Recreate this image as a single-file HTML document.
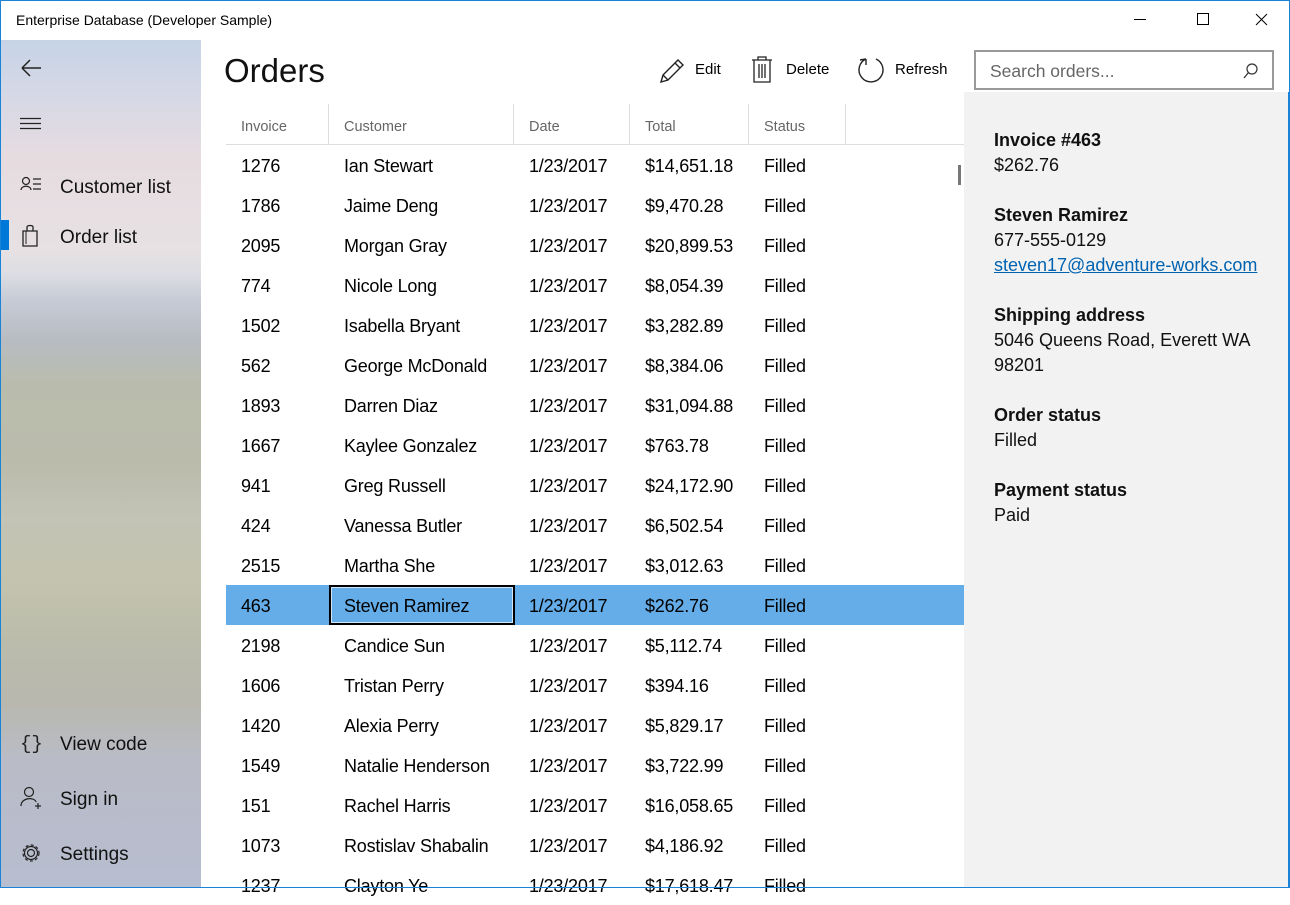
<!DOCTYPE html>
<html><head><meta charset="utf-8">
<style>
*{margin:0;padding:0;box-sizing:border-box}
body{width:1290px;height:888px;overflow:hidden;background:#fff;font-family:"Liberation Sans",sans-serif;color:#000;position:relative}
.frame{position:absolute;left:0;top:0;width:1290px;height:888px;border:1px solid #1883d7;pointer-events:none;z-index:10}
.title{position:absolute;left:16px;top:12px;font-size:14px;color:#000}
.side{position:absolute;left:1px;top:40px;width:200px;height:847px;background:linear-gradient(180deg,#c7d3e7 0px,#d4d8e6 50px,#e6dce0 120px,#e7e1e3 210px,#dcdde3 235px,#c6cbd6 260px,#b8bcc2 300px,#b9bcac 345px,#bbbbac 420px,#c3c3b6 480px,#c3c3ae 540px,#bbbcab 600px,#b8b8ae 660px,#b9bcc6 720px,#b8bdd0 847px)}
.nav{position:absolute;left:60px;font-size:19px;color:#111}
.ico{position:absolute}
.hdr{position:absolute;top:119px;font-size:14.5px;color:#666}
.vline{position:absolute;top:104px;width:1px;height:41px;background:#ddd}
.row{position:absolute;left:226px;width:738px;height:40px;font-size:18px;letter-spacing:-0.2px}
.row span{position:absolute;top:11px}
.c1{left:15px}.c2{left:118px}.c3{left:303px}.c4{left:419px}.c5{left:538px}
.sel{background:#65ade8}
.pane{position:absolute;left:964px;top:92px;width:324px;height:795px;background:#f2f2f2;overflow:hidden}
.pane b{font-weight:bold;display:block}
.pane div{position:absolute;left:30px;font-size:18px;line-height:25px;color:#111}
</style></head><body>
<div class="frame"></div>
<div class="title">Enterprise Database (Developer Sample)</div>
<svg class="ico" style="left:1134px;top:12px" width="140" height="16"><line x1="0" y1="7.5" x2="12" y2="7.5" stroke="#000"/><rect x="63.5" y="1.5" width="11" height="11" fill="none" stroke="#000"/><path d="M122 2 L133 13 M133 2 L122 13" stroke="#000"/></svg>

<div class="side"></div>
<svg class="ico" style="left:20px;top:58px" width="24" height="20"><path d="M2 10 H21 M2 10 L10 2 M2 10 L10 18" stroke="#222" stroke-width="1.5" fill="none"/></svg>
<svg class="ico" style="left:20px;top:116px" width="22" height="14"><path d="M0 2.5H21M0 7.5H21M0 12.5H21" stroke="#222" stroke-width="1.2"/></svg>
<svg class="ico" style="left:20px;top:176px" width="24" height="18"><circle cx="6" cy="5" r="3.5" fill="none" stroke="#222" stroke-width="1.2"/><path d="M1 14 C1 9 11 9 11 14" fill="none" stroke="#222" stroke-width="1.2"/><path d="M13 3H21M13 8H21M13 13H21" stroke="#222" stroke-width="1.2"/></svg>
<div class="nav" style="top:177px">Customer list</div>
<div style="position:absolute;left:1px;top:220px;width:8px;height:30px;background:#0078d7"></div>
<svg class="ico" style="left:21px;top:224px" width="20" height="24"><path d="M2 7H16V22H2Z M6 7V3C6 1 12 1 12 3V7" fill="none" stroke="#222" stroke-width="1.3"/><path d="M5 7V20" stroke="#222" stroke-width="1"/></svg>
<div class="nav" style="top:227px">Order list</div>
<svg class="ico" style="left:20px;top:732px" width="24" height="22"><text x="0" y="17" font-family="Liberation Mono" font-size="19" fill="#222">{}</text></svg>
<div class="nav" style="top:734px">View code</div>
<svg class="ico" style="left:20px;top:786px" width="24" height="24"><circle cx="9" cy="6" r="4.5" fill="none" stroke="#222" stroke-width="1.2"/><path d="M1 20 C1 11 15 11 16 16" fill="none" stroke="#222" stroke-width="1.2"/><path d="M18 17V23M15 20H21" stroke="#222" stroke-width="1.2"/></svg>
<div class="nav" style="top:789px">Sign in</div>
<svg class="ico" style="left:20px;top:842px" width="22" height="22"><circle cx="11" cy="11" r="3.5" fill="none" stroke="#222" stroke-width="1.2"/><circle cx="11" cy="11" r="8" fill="none" stroke="#222" stroke-width="1.2" stroke-dasharray="3 2.3"/><circle cx="11" cy="11" r="6.5" fill="none" stroke="#222" stroke-width="1.2"/></svg>
<div class="nav" style="top:844px">Settings</div>

<div style="position:absolute;left:224px;top:52px;font-size:33px;color:#111">Orders</div>
<svg class="ico" style="left:658px;top:57px" width="28" height="28"><path d="M3 25 L5 18 L20 3 L25 8 L10 23 Z M5 18 L10 23 M17 6 L22 11" fill="none" stroke="#222" stroke-width="1.4"/></svg>
<div style="position:absolute;left:695px;top:61px;font-size:15px">Edit</div>
<svg class="ico" style="left:750px;top:56px" width="26" height="28"><path d="M2 4H22 M8 4V1H16V4 M4 4V26H20V4 M9 8V22 M12 8V22 M15 8V22" fill="none" stroke="#222" stroke-width="1.3"/></svg>
<div style="position:absolute;left:786px;top:61px;font-size:15px">Delete</div>
<svg class="ico" style="left:857px;top:55px" width="30" height="30"><path d="M9 4 A12 12 0 1 0 19 4 M9 4 L9 10 M9 4 L3 5" fill="none" stroke="#222" stroke-width="1.4"/></svg>
<div style="position:absolute;left:895px;top:61px;font-size:15px">Refresh</div>
<div style="position:absolute;left:974px;top:50px;width:300px;height:40px;border:2px solid #999;background:#fff"><span style="position:absolute;left:14px;top:9px;font-size:17.5px;color:#666">Search orders...</span>
<svg style="position:absolute;right:12px;top:10px" width="18" height="18"><circle cx="10" cy="7" r="5" fill="none" stroke="#333" stroke-width="1.2"/><path d="M6.5 10.5 L2 16" stroke="#333" stroke-width="1.3"/></svg></div>

<div class="hdr" style="left:241px">Invoice</div>
<div class="hdr" style="left:344px">Customer</div>
<div class="hdr" style="left:529px">Date</div>
<div class="hdr" style="left:645px">Total</div>
<div class="hdr" style="left:764px">Status</div>
<div class="vline" style="left:328px"></div><div class="vline" style="left:513px"></div><div class="vline" style="left:629px"></div><div class="vline" style="left:748px"></div><div class="vline" style="left:845px"></div>
<div style="position:absolute;left:226px;top:144px;width:738px;height:1px;background:#ddd"></div>
<div style="position:absolute;left:958px;top:165px;width:3px;height:20px;background:#777"></div>

<div class="row" style="top:145px"><span class="c1">1276</span><span class="c2">Ian Stewart</span><span class="c3">1/23/2017</span><span class="c4">$14,651.18</span><span class="c5">Filled</span></div>
<div class="row" style="top:185px"><span class="c1">1786</span><span class="c2">Jaime Deng</span><span class="c3">1/23/2017</span><span class="c4">$9,470.28</span><span class="c5">Filled</span></div>
<div class="row" style="top:225px"><span class="c1">2095</span><span class="c2">Morgan Gray</span><span class="c3">1/23/2017</span><span class="c4">$20,899.53</span><span class="c5">Filled</span></div>
<div class="row" style="top:265px"><span class="c1">774</span><span class="c2">Nicole Long</span><span class="c3">1/23/2017</span><span class="c4">$8,054.39</span><span class="c5">Filled</span></div>
<div class="row" style="top:305px"><span class="c1">1502</span><span class="c2">Isabella Bryant</span><span class="c3">1/23/2017</span><span class="c4">$3,282.89</span><span class="c5">Filled</span></div>
<div class="row" style="top:345px"><span class="c1">562</span><span class="c2">George McDonald</span><span class="c3">1/23/2017</span><span class="c4">$8,384.06</span><span class="c5">Filled</span></div>
<div class="row" style="top:385px"><span class="c1">1893</span><span class="c2">Darren Diaz</span><span class="c3">1/23/2017</span><span class="c4">$31,094.88</span><span class="c5">Filled</span></div>
<div class="row" style="top:425px"><span class="c1">1667</span><span class="c2">Kaylee Gonzalez</span><span class="c3">1/23/2017</span><span class="c4">$763.78</span><span class="c5">Filled</span></div>
<div class="row" style="top:465px"><span class="c1">941</span><span class="c2">Greg Russell</span><span class="c3">1/23/2017</span><span class="c4">$24,172.90</span><span class="c5">Filled</span></div>
<div class="row" style="top:505px"><span class="c1">424</span><span class="c2">Vanessa Butler</span><span class="c3">1/23/2017</span><span class="c4">$6,502.54</span><span class="c5">Filled</span></div>
<div class="row" style="top:545px"><span class="c1">2515</span><span class="c2">Martha She</span><span class="c3">1/23/2017</span><span class="c4">$3,012.63</span><span class="c5">Filled</span></div>
<div class="row sel" style="top:585px"><div style="position:absolute;left:103px;top:0;width:186px;height:40px;border:2px solid #000"><div style="position:absolute;inset:0;border:1px solid #cfe6fa"></div></div><span class="c1">463</span><span class="c2">Steven Ramirez</span><span class="c3">1/23/2017</span><span class="c4">$262.76</span><span class="c5">Filled</span></div>
<div class="row" style="top:625px"><span class="c1">2198</span><span class="c2">Candice Sun</span><span class="c3">1/23/2017</span><span class="c4">$5,112.74</span><span class="c5">Filled</span></div>
<div class="row" style="top:665px"><span class="c1">1606</span><span class="c2">Tristan Perry</span><span class="c3">1/23/2017</span><span class="c4">$394.16</span><span class="c5">Filled</span></div>
<div class="row" style="top:705px"><span class="c1">1420</span><span class="c2">Alexia Perry</span><span class="c3">1/23/2017</span><span class="c4">$5,829.17</span><span class="c5">Filled</span></div>
<div class="row" style="top:745px"><span class="c1">1549</span><span class="c2">Natalie Henderson</span><span class="c3">1/23/2017</span><span class="c4">$3,722.99</span><span class="c5">Filled</span></div>
<div class="row" style="top:785px"><span class="c1">151</span><span class="c2">Rachel Harris</span><span class="c3">1/23/2017</span><span class="c4">$16,058.65</span><span class="c5">Filled</span></div>
<div class="row" style="top:825px"><span class="c1">1073</span><span class="c2">Rostislav Shabalin</span><span class="c3">1/23/2017</span><span class="c4">$4,186.92</span><span class="c5">Filled</span></div>
<div class="row" style="top:865px"><span class="c1">1237</span><span class="c2">Clayton Ye</span><span class="c3">1/23/2017</span><span class="c4">$17,618.47</span><span class="c5">Filled</span></div>

<div class="pane">
<div style="top:36px"><b>Invoice #463</b>$262.76</div>
<div style="top:111px;white-space:nowrap"><b>Steven Ramirez</b>677-555-0129<br><span style="color:#0063b1;text-decoration:underline">steven17@adventure-works.com</span></div>
<div style="top:211px"><b>Shipping address</b>5046 Queens Road, Everett WA<br>98201</div>
<div style="top:311px"><b>Order status</b>Filled</div>
<div style="top:386px"><b>Payment status</b>Paid</div>
</div>
<div style="position:absolute;left:1288px;top:92px;width:2px;height:796px;background:#1883d7"></div>
</body></html>
